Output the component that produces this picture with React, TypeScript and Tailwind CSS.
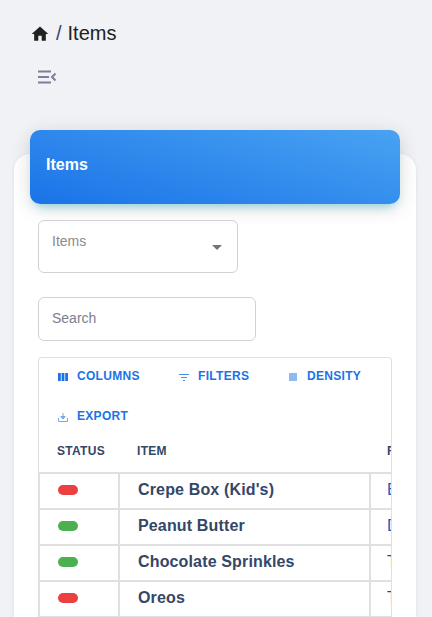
const rows = [
  { color: "bg-[#ea4040]", name: "Crepe Box (Kid's)", third: "Extra", blue: true },
  { color: "bg-[#4caf50]", name: "Peanut Butter", third: "Drizzle", blue: true },
  { color: "bg-[#4caf50]", name: "Chocolate Sprinkles", third: "Topping", blue: false },
  { color: "bg-[#ea4040]", name: "Oreos", third: "Topping", blue: false },
];

function ToolButton({ icon, label, className }: { icon: React.ReactNode; label: string; className: string }) {
  return (
    <div className={`flex items-center h-[16px] ${className}`}>
      <span className="w-[10px] h-[10px] flex items-center justify-center mt-[2px]">{icon}</span>
      <span className="ml-[9px] text-[12px] leading-[16px] font-bold tracking-[0.3px] text-[#1a73e8]">{label}</span>
    </div>
  );
}

export default function App() {
  return (
    <div className="w-[432px] h-[617px] overflow-hidden bg-[#f0f2f5] font-['Liberation_Sans',sans-serif] flex flex-col">
      <div className="shrink-0 pl-[32px] pt-[21px] h-[55px] flex items-center text-[20px] leading-[24px] text-[#212121] pb-[11px]">
        <svg viewBox="0 0 24 24" className="w-[20px] h-[20px] -ml-[2px] mt-[3px]" fill="#212121"><path d="M10 20v-6h4v6h5v-8h3L12 3 2 12h3v8z" /></svg>
        <span className="ml-[6px] text-[#344767]">/</span>
        <span className="ml-[6px]">Items</span>
      </div>
      <div className="shrink-0 pl-[38px] h-[20px] mt-[15px]">
        <svg viewBox="0 0 18 14" className="w-[18px] h-[14px]" fill="none" stroke="#7b809a" strokeWidth="2">
          <path d="M0 1.500H13M0 7H11M0 12.500H13" />
          <path d="M17.500 3.500L14 7l3.500 3.500" />
        </svg>
      </div>
      <div className="ml-[14px] mr-[16px] mt-[64px] min-h-0 bg-white rounded-t-[16px] shadow-[0_1px_4px_rgba(0,0,0,0.08)] flex-1 relative pt-[66px] px-[24px]">
        <div className="absolute left-[16px] right-[16px] -top-[24px] h-[74px] rounded-[10px] bg-[linear-gradient(195deg,#49a3f1,#1a73e8)] shadow-[0_4px_20px_0_rgba(0,0,0,0.14),0_7px_10px_-5px_rgba(0,188,212,0.4)] flex items-center pl-[16px] pb-[4px]">
          <span className="text-white font-bold text-[16px] leading-[20px]">Items</span>
        </div>
        <div className="w-[200px] h-[53px] border border-[#d2d2d2] rounded-[6px] relative">
          <span className="absolute left-[13px] top-[12px] text-[14px] leading-[16px] text-[#8a8a8a]">Items</span>
          <span className="absolute left-[173px] top-[24px] w-0 h-0 border-l-[5px] border-r-[5px] border-t-[5px] border-l-transparent border-r-transparent border-t-[#757575]" />
        </div>
        <div className="w-[218px] h-[44px] mt-[24px] border border-[#d2d2d2] rounded-[6px] flex items-center pl-[13px] pb-[2px]">
          <span className="text-[14px] leading-[18px] text-[#7e7e8e]">Search</span>
        </div>
        <div className="w-[354px] mt-[16px] border border-[#e0e0e0] border-b-0 rounded-t-[4px] overflow-hidden">
          <div className="flex flex-wrap pt-[10px] pl-[19px]">
            <ToolButton className="w-[121px]" label="COLUMNS" icon={
              <svg viewBox="0 0 10 8" className="w-[10px] h-[8px]" fill="#1a73e8"><path d="M0 0h2.800v8H0zM3.600 0h2.800v8H3.600zM7.200 0H10v8H7.200z" /></svg>
            } />
            <ToolButton className="w-[110px]" label="FILTERS" icon={
              <svg viewBox="0 0 10 8" className="w-[10px] h-[8px] opacity-80" fill="#1a73e8"><path d="M0 1h10v1H0zM2 4h6v1H2zM4 7h2v1H4z" /></svg>
            } />
            <ToolButton className="w-[90px] -ml-px" label="DENSITY" icon={
              <span className="w-[8px] h-[8px] bg-[#8fb9f5] block" />
            } />
            <ToolButton className="w-[121px] mt-[24px]" label="EXPORT" icon={
              <svg viewBox="0 0 10 10" className="w-[10px] h-[10px] opacity-60" fill="none" stroke="#1a73e8" strokeWidth="1"><path d="M.500 6v3.500h9V6" /><path d="M5 1v5" /><path d="M2.800 4.500L5 7l2.200-2.500z" fill="#1a73e8" /></svg>
            } />
          </div>
          <div className="flex h-[50px] items-start pt-[19px] border-b-2 border-[#e0e0e0] text-[12px] leading-[16px] font-bold tracking-[0.3px] text-[#344767] whitespace-nowrap">
            <span className="pl-[18px] w-[98px] shrink-0">STATUS</span>
            <span className="w-[250px] shrink-0">ITEM</span>
            <span className="shrink-0">FLAVOR</span>
          </div>
          {rows.map((r) => (
            <div key={r.name} className="flex h-[36px] border-b-2 border-[#e0e0e0] whitespace-nowrap">
              <div className="w-[79px] shrink-0 border-l-[1px] border-[#e0e0e0] flex items-center pl-[18px] pb-[3px]">
                <span className={`w-[20px] h-[10px] rounded-full ${r.color}`} />
              </div>
              <div className="w-[253px] shrink-0 border-x-2 border-[#e0e0e0] flex items-center pl-[18px] text-[16px] tracking-[0.15px] font-bold text-[#344767] pb-[3px]">{r.name}</div>
              <div className={`pl-[16px] shrink-0 flex items-center text-[16px] pb-[3px] ${r.blue ? "text-[#1a5fb4]" : "text-[#344767]"}`}>{r.third}</div>
            </div>
          ))}
        </div>
      </div>
    </div>
  );
}
